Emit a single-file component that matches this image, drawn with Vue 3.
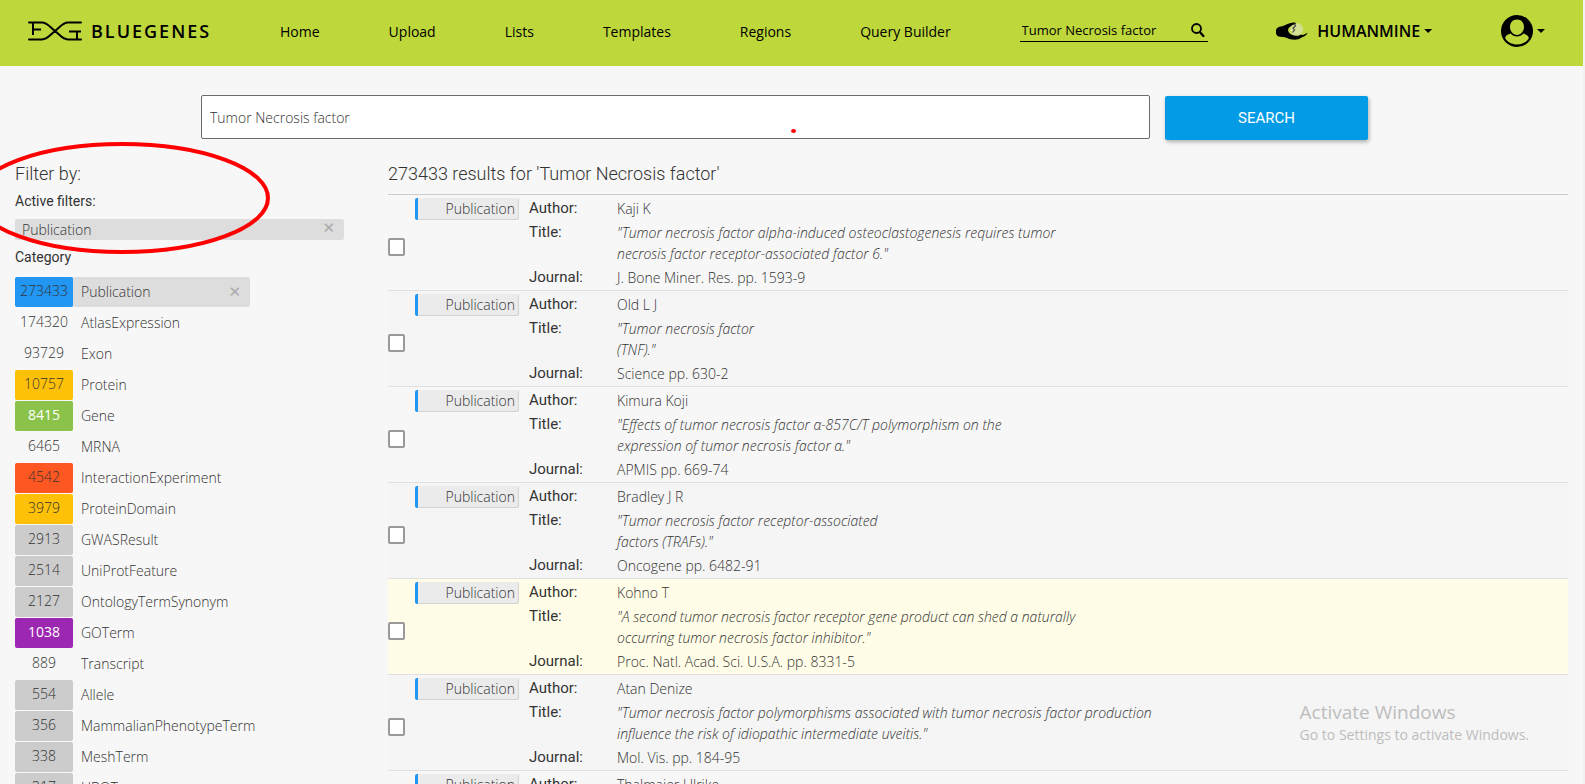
<script setup>
import { ref } from 'vue'

const term = ref('Tumor Necrosis factor')
const nav = ['Home', 'Upload', 'Lists', 'Templates', 'Regions', 'Query Builder']

const categories = [
  { count: 273433, name: 'Publication', tone: 'blue', active: true },
  { count: 174320, name: 'AtlasExpression', tone: 'plain' },
  { count: 93729, name: 'Exon', tone: 'plain' },
  { count: 10757, name: 'Protein', tone: 'amber' },
  { count: 8415, name: 'Gene', tone: 'green' },
  { count: 6465, name: 'MRNA', tone: 'plain' },
  { count: 4542, name: 'InteractionExperiment', tone: 'orange' },
  { count: 3979, name: 'ProteinDomain', tone: 'amber' },
  { count: 2913, name: 'GWASResult', tone: 'grey' },
  { count: 2514, name: 'UniProtFeature', tone: 'grey' },
  { count: 2127, name: 'OntologyTermSynonym', tone: 'grey' },
  { count: 1038, name: 'GOTerm', tone: 'purple' },
  { count: 889, name: 'Transcript', tone: 'plain' },
  { count: 554, name: 'Allele', tone: 'grey' },
  { count: 356, name: 'MammalianPhenotypeTerm', tone: 'grey' },
  { count: 338, name: 'MeshTerm', tone: 'grey' },
  { count: 317, name: 'UBOT', tone: 'grey' },
]

const results = [
  { author: 'Kaji K', title: '"Tumor necrosis factor alpha-induced osteoclastogenesis requires tumor\nnecrosis factor receptor-associated factor 6."', journal: 'J. Bone Miner. Res. pp. 1593-9' },
  { author: 'Old L J', title: '"Tumor necrosis factor\n(TNF)."', journal: 'Science pp. 630-2' },
  { author: 'Kimura Koji', title: '"Effects of tumor necrosis factor α-857C/T polymorphism on the\nexpression of tumor necrosis factor α."', journal: 'APMIS pp. 669-74' },
  { author: 'Bradley J R', title: '"Tumor necrosis factor receptor-associated\nfactors (TRAFs)."', journal: 'Oncogene pp. 6482-91' },
  { author: 'Kohno T', title: '"A second tumor necrosis factor receptor gene product can shed a naturally\noccurring tumor necrosis factor inhibitor."', journal: 'Proc. Natl. Acad. Sci. U.S.A. pp. 8331-5', hover: true },
  { author: 'Atan Denize', title: '"Tumor necrosis factor polymorphisms associated with tumor necrosis factor production\ninfluence the risk of idiopathic intermediate uveitis."', journal: 'Mol. Vis. pp. 184-95' },
  { author: 'Thalmaier Ulrike', title: '', journal: '' },
]
</script>

<template>
  <div class="page">
    <header class="bar">
      <a class="brand" href="#">
        <svg class="logo" width="54" height="20" viewBox="0 0 54 20" fill="none" stroke="#000" stroke-width="2">
          <path d="M1 1.500H14C19 1.500 21 5 27 10S35 18.500 40 18.500H53M1 18.500H14C19 18.500 21 15 27 10S35 1.500 40 1.500H53" stroke-linecap="round" />
          <path d="M5 2V14M5 8.500H13M41 10.500H53M49 10.500V18" />
        </svg>
        <span>BLUEGENES</span>
      </a>
      <nav class="nav">
        <a v-for="item in nav" :key="item" href="#">{{ item }}</a>
      </nav>
      <div class="quick">
        <input type="text" v-model="term" aria-label="Quick search" />
        <button type="button" aria-label="Search">
          <svg width="14" height="15" viewBox="0 0 14 15" fill="none" stroke="#000">
            <circle cx="5.5" cy="5.5" r="4.5" stroke-width="1.8" />
            <path d="M8.800 9L13 13.800" stroke-width="2.2" />
          </svg>
        </button>
      </div>
      <a class="mine" href="#">
        <svg width="32" height="18" viewBox="0 0 32 18">
          <circle cx="20.500" cy="7.500" r="6.500" fill="#d3df92" />
          <path d="M0 8C1 5 4 4.500 7 4C10 3 13 1 16 0.800C18 0.500 19 0 20 1.500C18 2.500 16.500 2.800 15 4.200C13 5 12 6.500 12 8.500C12.500 11 15 13 18 13.500C21 14 23.500 14 24.500 12.500C26.500 13.500 29 12.500 31.500 10.500C31 13 28 15 25.500 15.500C22 18.500 15 18 11 16C8 14.500 5 15 2 14.200C0 13 -0.500 10 0 8Z" />
          <path d="M18.500 1.500L19.500 4L17 6L18.500 8L16.500 10.500" fill="none" stroke="#444" stroke-width="1.2" />
        </svg>
        <span>HUMANMINE</span>
        <i class="caret"></i>
      </a>
      <a class="user" href="#" aria-label="Account">
        <svg width="32" height="32" viewBox="0 0 32 32">
          <circle cx="16" cy="16" r="16" />
          <path d="M16 4.500C11.500 4.500 9 8 9 12C9 16 12 20 16 20C20 20 23 16 23 12C23 8 20.500 4.500 16 4.500ZM9.500 18.500C5.500 19.500 4 22 4.200 23.200C9 31.500 23 31.500 27.800 23.200C28 22 26.500 19.500 22.500 18.500C19 22.500 13 22.500 9.500 18.500Z" fill="#bed73b" />
        </svg>
        <i class="caret"></i>
      </a>
    </header>

    <form class="search" @submit.prevent>
      <input type="text" v-model="term" aria-label="Search term" />
      <button type="submit">SEARCH</button>
    </form>

    <main class="content">
      <aside class="side">
        <h2>Filter by:</h2>
        <h3>Active filters:</h3>
        <button type="button" class="chip"><span>Publication</span><span class="x">✕</span></button>
        <h3 class="cat">Category</h3>
        <ul>
          <li v-for="c in categories" :key="c.name">
            <a href="#" :class="{ active: c.active }">
              <span class="count" :class="c.tone">{{ c.count }}</span>
              <span class="name">{{ c.name }}</span>
              <span v-if="c.active" class="x">✕</span>
            </a>
          </li>
        </ul>
      </aside>

      <section class="results">
        <h2>273433 results for 'Tumor Necrosis factor'</h2>
        <article v-for="r in results" :key="r.author" class="row" :class="{ hover: r.hover }">
          <input type="checkbox" :aria-label="'Select ' + r.author" />
          <span class="tag">Publication</span>
          <dl>
            <dt>Author:</dt><dd>{{ r.author }}</dd>
            <dt>Title:</dt><dd class="title">{{ r.title }}</dd>
            <dt>Journal:</dt><dd>{{ r.journal }}</dd>
          </dl>
        </article>
      </section>
    </main>

    <svg class="ring" width="296" height="116" viewBox="0 0 296 116" fill="none" stroke="#f00" stroke-width="4">
      <ellipse cx="148" cy="58" rx="146" ry="54" />
    </svg>
    <i class="dot"></i>
    <div class="watermark">
      <p class="big">Activate Windows</p>
      <p>Go to Settings to activate Windows.</p>
    </div>
  </div>
</template>

<style>
body { margin: 0; background: #f7f7f7; }
</style>

<style scoped>
* { box-sizing: border-box; }
.page {
  position: relative; height: 100vh; overflow: hidden;
  background: #f7f7f7; border-right: 2px solid #f1f1f1;
  color: #333; font: 300 14px/21px "Open Sans", sans-serif;
}
h2, h3, p, ul, dl, dd { margin: 0; padding: 0; }
a { color: inherit; text-decoration: none; }
button { padding: 0; border: 0; background: none; font: inherit; color: inherit; cursor: pointer; }
input { font: inherit; color: inherit; }

.bar {
  display: flex; align-items: center; justify-content: space-between;
  height: 66px; padding: 0 38px 4px 28px; background: #bed73b; color: #000;
  font-weight: 400;
}
.brand { display: flex; align-items: center; gap: 9px; font-size: 18px; font-weight: 600; letter-spacing: 2px; }
.nav { display: flex; gap: 69px; }
.quick { display: flex; align-items: center; width: 188px; height: 21px; padding: 0 3px 0 2px; border-bottom: 1px solid #000; }
.quick input { flex: 1; min-width: 0; padding: 0; border: 0; outline: 0; background: none; font-size: 13px; }
.quick svg { display: block; }
.mine { display: flex; align-items: center; font-weight: 600; font-size: 16px; }
.mine span { margin: 0 4px 0 9px; }
.caret { width: 8px; height: 4px; background: #000; clip-path: polygon(0 0, 100% 0, 50% 100%); }
.user { display: flex; align-items: center; gap: 4px; }

.search { display: flex; gap: 15px; margin: 29px 215px 0 201px; }
.search input { flex: 1; min-width: 0; height: 44px; padding: 0 8px; border: 1px solid #6b6b6b; border-radius: 2px; background: #fff; outline: 0; }
.search button {
  width: 203px; height: 44px; margin-top: 1px; border-radius: 2px; background: #039be5; color: #fff;
  font: 400 15px "Roboto", sans-serif; box-shadow: 1px 2px 4px rgba(0, 0, 0, .3);
}

.content { display: flex; gap: 44px; padding: 21px 15px 0; }
h2 { font: 300 18px/26px "Roboto", sans-serif; }
.side { flex: 0 0 329px; }
h3 { font: 400 14px/20px "Roboto", sans-serif; margin-top: 2px; }
.side h2 { margin-bottom: 4px; }
.chip { display: flex; justify-content: space-between; width: 100%; height: 21px; margin-top: 8px; padding: 0 9px 0 7px; border-radius: 2px; background: #ddd; }
.x { color: #aaa; font: 700 15px/18px "DejaVu Sans", sans-serif; }
.cat { margin-top: 7px; }
ul { list-style: none; margin-top: 10px; }
li { height: 31px; }
li a { display: flex; align-items: center; width: 235px; height: 30px; border-radius: 2px; }
li a.active { background: #ddd; }
li .x { margin: 0 9px 0 auto; }
.count { flex: none; width: 58px; padding-bottom: 2px; border-radius: 2px; line-height: 28px; text-align: center; }
.name { margin-left: 8px; padding-bottom: 2px; }
.blue { background: #2196f3; }
.amber { background: #ffc107; }
.green { background: #8bc34a; color: #fff; font-weight: 400; }
.orange { background: #ff5722; }
.grey { background: #ccc; }
.purple { background: #9c27b0; color: #fff; font-weight: 400; }

.results { flex: 1; min-width: 0; }
.results h2 { padding-bottom: 7px; border-bottom: 1px solid #ccc; }
.row { display: flex; align-items: flex-start; height: 96px; border-bottom: 1px solid #e0e0e0; }
.row:nth-of-type(even) { background: #f5f5f5; }
.row.hover { background: #fffde7; }
.row input {
  appearance: none; width: 17px; height: 18px; margin: 43px 10px 0 0;
  border: 2px solid #999; border-radius: 2px; background: #fff;
}
.tag {
  width: 104px; height: 22px; margin-top: 3px; padding-right: 4px; text-align: right;
  border-left: 3px solid #2196f3; border-radius: 2px; background: #ebebeb; box-shadow: inset -1px -1px #d3d3d3;
}
dl { display: grid; grid-template-columns: 88px auto; row-gap: 3px; margin: 3px 0 0 10px; }
dt { font: 400 15px/21px "Roboto", sans-serif; }
.title { white-space: pre-line; font-style: italic; }

.ring { position: absolute; left: -26px; top: 140px; pointer-events: none; }
.dot { position: absolute; left: 791px; top: 129px; width: 5px; height: 4px; border-radius: 50%; background: #f00; }
.watermark { position: absolute; right: 54px; bottom: 39px; color: #bdbdbd; font-weight: 400; line-height: 20px; }
.watermark .big { font-size: 19px; line-height: 26px; }
</style>
